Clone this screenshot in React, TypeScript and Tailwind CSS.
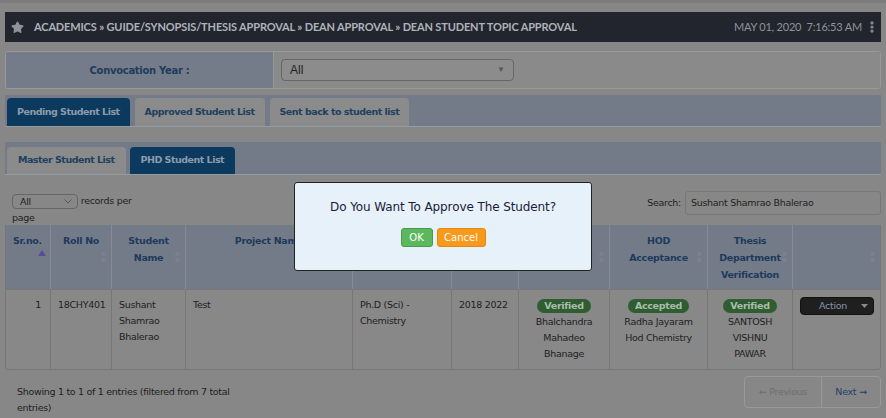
import { Star, EllipsisVertical } from "lucide-react"

const SortIcon = () => (
  <svg width="7" height="14" viewBox="0 0 7 14" className="absolute right-[4px] top-[25px]">
    <path d="M3.5 1 L6.5 5.5 L0.5 5.5 Z" fill="#7d838d" />
    <path d="M3.5 13 L6.5 8.5 L0.5 8.5 Z" fill="#7d838d" />
  </svg>
)

function Badge({ label }: { label: string }) {
  return (
    <span className="inline-block rounded-full bg-[#2f5d31] px-[7px] text-[9.5px] font-bold leading-[14px] text-[#a9bea9]">
      {label}
    </span>
  )
}

export default function App() {
  return (
    <div className="relative min-h-[418px] overflow-hidden border-t-[3px] border-[#7d7d7d] bg-[#878787] pt-[9px] font-['DejaVu_Sans',sans-serif] text-[9.5px] tracking-[-0.3px] text-[#1b1b1b]">
      {/* breadcrumb bar */}
      <div className="mx-[5px] flex h-[30px] items-center bg-[#22252d] pl-[6px] pr-[2px] font-['Lato',sans-serif] tracking-normal">
        <Star size={13} className="fill-[#8e939b] text-[#8e939b]" />
        <span className="ml-[10px] text-[11px] font-bold tracking-[-0.15px] text-[#aeb3bb]">
          ACADEMICS » GUIDE/SYNOPSIS/THESIS APPROVAL » DEAN APPROVAL » DEAN STUDENT TOPIC APPROVAL
        </span>
        <span className="ml-auto text-[11px] tracking-[-0.2px] text-[#8e949c]">MAY 01, 2020&nbsp;&nbsp;7:16:53 AM</span>
        <EllipsisVertical size={14} strokeWidth={3.5} className="ml-[3px] text-[#8e939b]" />
      </div>

      {/* convocation filter */}
      <div className="mx-[5px] mt-[9px] flex h-[38px] overflow-hidden rounded-[3px] border border-[#999]">
        <div className="flex w-[268px] items-center justify-center border-r border-[#999] bg-[#747c89] text-[10px] font-bold text-[#1f3b5b]">
          Convocation Year :
        </div>
        <div className="flex flex-1 items-center bg-[#8a8a8a] pl-[7px]">
          <div className="flex h-[22px] w-[233px] items-center justify-between rounded-[4px] border border-[#666] bg-[#8c8c8c] px-[8px] font-['Liberation_Sans',sans-serif] text-[12px] tracking-normal text-[#1e1e1e]">
            All
            <span className="text-[8px] text-[#555]">▼</span>
          </div>
        </div>
      </div>

      {/* top tabs */}
      <div className="mx-[5px] mt-[6px] flex gap-[5px] border-b border-[#969aa1] bg-[#737b88] px-[2px] pt-[3px] tracking-[-0.5px]">
        <div className="flex h-[28px] items-center rounded-t-[4px] bg-[#0b3a5e] px-[10px] font-bold text-[#8d9bab]">
          Pending Student List
        </div>
        <div className="flex h-[28px] items-center rounded-t-[4px] bg-[#8b8b8b] px-[10px] font-bold text-[#20405f]">
          Approved Student List
        </div>
        <div className="flex h-[28px] items-center rounded-t-[4px] bg-[#8b8b8b] px-[10px] font-bold text-[#20405f]">
          Sent back to student list
        </div>
      </div>

      {/* sub tabs */}
      <div className="mx-[5px] mt-[15px] flex gap-[4px] border-b border-[#969aa1] bg-[#737b88] px-[2px] pt-[5px] tracking-[-0.5px]">
        <div className="flex h-[27px] items-center rounded-t-[4px] bg-[#8b8b8b] px-[11px] font-bold text-[#20405f]">
          Master Student List
        </div>
        <div className="flex h-[27px] items-center rounded-t-[4px] bg-[#0b3a5e] px-[11px] font-bold text-[#8d9bab]">
          PHD Student List
        </div>
      </div>

      {/* records / search */}
      <div className="mx-[5px] mt-[16px] flex h-[34px] items-start justify-between">
        <div className="w-[140px] pl-[7px] pt-[1px] leading-[17px] text-[#1e1e1e]">
          <span className="inline-flex h-[15px] w-[66px] items-center justify-between rounded-[4px] border border-[#666] pl-[7px] pr-[5px] align-middle">
            All
            <svg width="8" height="5" viewBox="0 0 8 5"><path d="M0.5 0.5 L4 4 L7.5 0.5" fill="none" stroke="#555" strokeWidth="1" /></svg>
          </span>{" "}
          records per page
        </div>
        <div className="flex items-center gap-[4px]">
          <span className="text-[#1e1e1e]">Search:</span>
          <div className="flex h-[24px] w-[196px] items-center rounded-[3px] border border-[#777] px-[5px] text-[#222]">
            Sushant Shamrao Bhalerao
          </div>
        </div>
      </div>

      {/* table */}
      <div className="mx-[5px] overflow-hidden rounded-b-[4px] border border-t-0 border-[#777]">
        <div className="grid grid-cols-[45px_61px_74px_167px_99px_67px_91px_98px_85px_1fr] bg-[#747b88] font-bold leading-[17px] text-[#1c3a5c]">
          <div className="relative h-[64px] border-r border-[#858a93] pl-[7px] pt-[7px]">
            Sr.no.
            <svg width="8" height="6" viewBox="0 0 8 6" className="absolute left-[32px] top-[25px]">
              <path d="M4 0 L8 6 L0 6 Z" fill="#5a4c9a" />
            </svg>
          </div>
          <div className="relative border-r border-[#858a93] pt-[7px] text-center">Roll No<SortIcon /></div>
          <div className="relative border-r border-[#858a93] pt-[7px] text-center">Student<br />Name<SortIcon /></div>
          <div className="relative border-r border-[#858a93] pt-[7px] text-center">Project Name<SortIcon /></div>
          <div className="relative border-r border-[#858a93]"><SortIcon /></div>
          <div className="relative border-r border-[#858a93]"><SortIcon /></div>
          <div className="relative border-r border-[#858a93]"><SortIcon /></div>
          <div className="relative border-r border-[#858a93] pt-[7px] text-center">HOD<br />Acceptance<SortIcon /></div>
          <div className="relative border-r border-[#858a93] pt-[7px] text-center">Thesis<br />Department<br />Verification<SortIcon /></div>
          <div className="relative pt-[7px]"><SortIcon /></div>
        </div>
        <div className="grid grid-cols-[45px_61px_74px_167px_99px_67px_91px_98px_85px_1fr] border-t border-[#777] bg-[#888] leading-[16px] text-[#1e1e1e]">
          <div className="h-[79px] border-r border-[#777] pr-[9px] pt-[7px] text-right">1</div>
          <div className="border-r border-[#777] pl-[7px] pt-[7px]">18CHY401</div>
          <div className="border-r border-[#777] pl-[7px] pt-[7px]">Sushant<br />Shamrao<br />Bhalerao</div>
          <div className="border-r border-[#777] pl-[7px] pt-[7px]">Test</div>
          <div className="border-r border-[#777] pl-[7px] pt-[7px]">Ph.D (Sci) -<br />Chemistry</div>
          <div className="border-r border-[#777] pl-[7px] pt-[7px]">2018 2022</div>
          <div className="border-r border-[#777] pt-[8px] text-center"><Badge label="Verified" /><br />Bhalchandra<br />Mahadeo<br />Bhanage</div>
          <div className="border-r border-[#777] pt-[8px] text-center"><Badge label="Accepted" /><br />Radha Jayaram<br />Hod Chemistry</div>
          <div className="border-r border-[#777] pt-[8px] text-center"><Badge label="Verified" /><br />SANTOSH<br />VISHNU<br />PAWAR</div>
          <div className="pl-[7px] pt-[7px]">
            <div className="flex h-[18px] w-[74px] items-center justify-between rounded-[4px] border border-[#111] bg-[#1f1f1f] pl-[18px] pr-[5px] text-[#8795a6]">
              Action
              <svg width="7" height="4" viewBox="0 0 7 4"><path d="M0 0 L7 0 L3.5 4 Z" fill="#8a8a8a" /></svg>
            </div>
          </div>
        </div>
      </div>

      {/* footer */}
      <div className="mx-[5px] mt-[6px] flex items-start justify-between">
        <div className="w-[232px] pl-[12px] pt-[8px] leading-[16px] text-[#1e1e1e]">
          Showing 1 to 1 of 1 entries (filtered from 7 total entries)
        </div>
        <div className="flex h-[32px] overflow-hidden rounded-[4px] border border-[#999]">
          <div className="flex w-[77px] items-center justify-center border-r border-[#999] text-[#6e6e6e]">← Previous</div>
          <div className="flex w-[58px] items-center justify-center text-[#1e3f6a]">Next →</div>
        </div>
      </div>

      {/* confirm dialog */}
      <div className="absolute left-1/2 top-[179px] flex h-[89px] w-[298px] -translate-x-1/2 flex-col items-center rounded-[3px] border border-[#222] bg-[#e6f1fa] tracking-normal">
        <div className="mt-[15px] text-[12px] tracking-[-0.1px] text-[#1b1b3a]">Do You Want To Approve The Student?</div>
        <div className="mt-[12px] flex gap-[4px]">
          <button className="h-[19px] w-[32px] rounded-[3px] border border-[#4a9a4a] bg-[#5cb85c] text-[10px] text-white">OK</button>
          <button className="h-[19px] w-[49px] rounded-[3px] border border-[#e08a10] bg-[#f8991c] text-[10px] text-white">Cancel</button>
        </div>
      </div>
    </div>
  )
}
